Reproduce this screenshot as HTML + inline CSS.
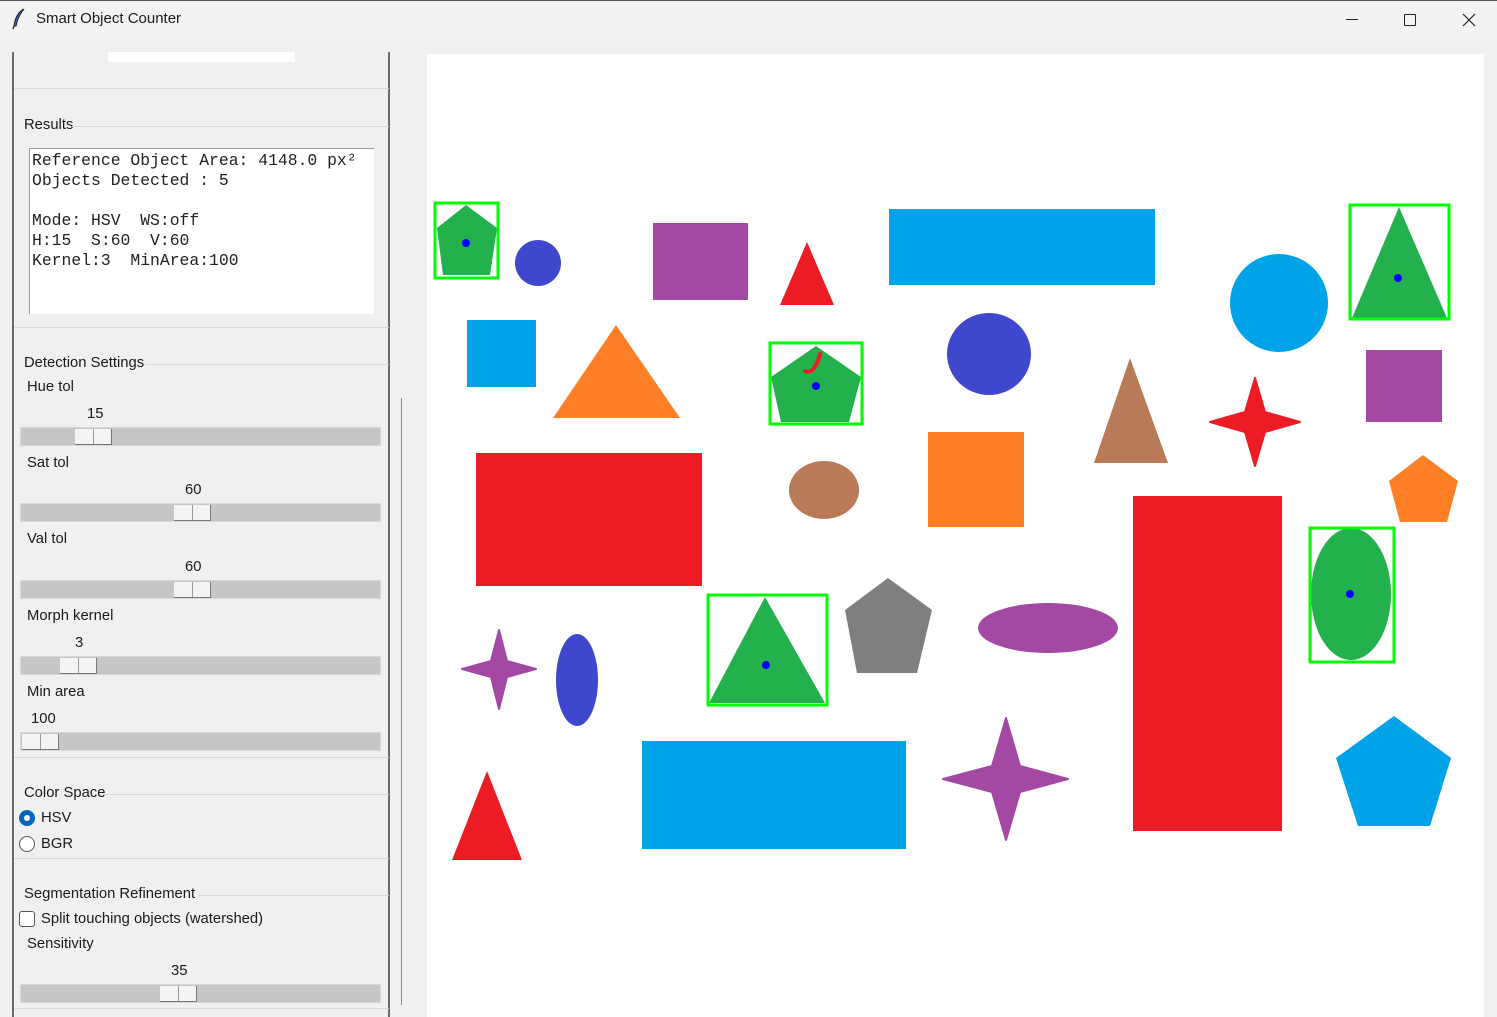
<!DOCTYPE html>
<html><head><meta charset="utf-8"><style>
*{margin:0;padding:0;box-sizing:border-box}
body{width:1497px;height:1017px;overflow:hidden;background:#f0f0f0;font-family:"Liberation Sans","DejaVu Sans",sans-serif;font-size:14.8px;color:#000;position:relative}
.a{position:absolute}
.t{position:absolute;font-size:14.8px;white-space:nowrap;line-height:16px;color:#1a1a1a}
.trough{position:absolute;left:20px;width:361px;height:19px;background:#c6c6c6;border:1px solid #d8d8d8}
.thumb{position:absolute;top:1px;width:37px;height:16px;background:#f4f4f4;border-right:1px solid #777;border-bottom:1px solid #777}
.thumb:after{content:"";position:absolute;left:18px;top:0;width:1px;height:15px;background:#999}
.hl{position:absolute;height:1px;background:#d9d9d9;left:14px;width:375px}
</style></head><body>
<div class="a" style="left:0;top:0;width:1497px;height:40px;background:#f3f3f3;border-top:1px solid #555"></div>
<svg class="a" style="left:10px;top:8px" width="18" height="22"><path d="M14 1 C8 4 5 10 4 18 L6 18 C7 12 10 6 14 1Z" fill="#3a66b0" stroke="#223" stroke-width="1"/><path d="M4 18 L3 21" stroke="#333" stroke-width="1.5"/></svg>
<div class="t" style="left:36px;top:11px;font-size:15px">Smart Object Counter</div>
<div class="a" style="left:1346px;top:19px;width:12px;height:1px;background:#222"></div>
<div class="a" style="left:1404px;top:14px;width:12px;height:12px;border:1px solid #222;border-radius:1px"></div>
<svg class="a" style="left:1462px;top:13px" width="14" height="14"><path d="M1 1L13 13M13 1L1 13" stroke="#222" stroke-width="1.2"/></svg>

<div class="a" style="left:12px;top:52px;width:2px;height:965px;background:#6a6a6a"></div>
<div class="a" style="left:388px;top:52px;width:2px;height:965px;background:#6a6a6a"></div>
<div class="a" style="left:401px;top:398px;width:1px;height:607px;background:#888"></div>
<div class="a" style="left:108px;top:52px;width:187px;height:10px;background:#fff"></div>
<div class="hl" style="top:88px"></div>
<div class="t" style="left:24px;top:117px">Results</div>
<div class="hl" style="top:126px;left:72px;width:317px"></div>
<div class="a" style="left:29px;top:148px;width:345px;height:166px;background:#fff;border-left:1px solid #999;border-top:1px solid #999"></div>
<pre class="a" style="left:32px;top:151px;font-family:'Liberation Mono','Courier New',monospace;font-size:16.4px;line-height:20px;color:#222">Reference Object Area: 4148.0 px²
Objects Detected : 5

Mode: HSV  WS:off
H:15  S:60  V:60
Kernel:3  MinArea:100</pre>
<div class="hl" style="top:327px"></div>
<div class="t" style="left:24px;top:355px">Detection Settings</div>
<div class="hl" style="top:364px;left:145px;width:244px"></div>

<div class="t" style="left:27px;top:379px">Hue tol</div>
<div class="t" style="left:87px;top:406px">15</div>
<div class="trough" style="top:427px"><div class="thumb" style="left:54px"></div></div>
<div class="t" style="left:27px;top:455px">Sat tol</div>
<div class="t" style="left:185px;top:482px">60</div>
<div class="trough" style="top:503px"><div class="thumb" style="left:153px"></div></div>
<div class="t" style="left:27px;top:531px">Val tol</div>
<div class="t" style="left:185px;top:559px">60</div>
<div class="trough" style="top:580px"><div class="thumb" style="left:153px"></div></div>
<div class="t" style="left:27px;top:608px">Morph kernel</div>
<div class="t" style="left:75px;top:635px">3</div>
<div class="trough" style="top:656px"><div class="thumb" style="left:39px"></div></div>
<div class="t" style="left:27px;top:684px">Min area</div>
<div class="t" style="left:31px;top:711px">100</div>
<div class="trough" style="top:732px"><div class="thumb" style="left:1px"></div></div>
<div class="hl" style="top:757px"></div>
<div class="t" style="left:24px;top:785px">Color Space</div>
<div class="hl" style="top:794px;left:104px;width:285px"></div>
<div class="a" style="left:19px;top:810px;width:16px;height:16px;border-radius:50%;background:#0067c0"></div>
<div class="a" style="left:24px;top:815px;width:6px;height:6px;border-radius:50%;background:#fff"></div>
<div class="t" style="left:41px;top:810px">HSV</div>
<div class="a" style="left:19px;top:836px;width:16px;height:16px;border-radius:50%;border:1px solid #555;background:#fff"></div>
<div class="t" style="left:41px;top:836px">BGR</div>
<div class="hl" style="top:858px"></div>
<div class="t" style="left:24px;top:886px">Segmentation Refinement</div>
<div class="hl" style="top:895px;left:198px;width:191px"></div>
<div class="a" style="left:19px;top:911px;width:16px;height:16px;border-radius:3px;border:1px solid #555;background:#fff"></div>
<div class="t" style="left:41px;top:911px">Split touching objects (watershed)</div>
<div class="t" style="left:27px;top:936px">Sensitivity</div>
<div class="t" style="left:171px;top:963px">35</div>
<div class="trough" style="top:984px"><div class="thumb" style="left:139px"></div></div>
<div class="hl" style="top:1008px"></div>

<svg class="a" style="left:0;top:0" width="1497" height="1017">
<rect x="427" y="54" width="1057" height="963" fill="#fff"/>
<polygon points="466,205 497,228 490,275 443,275 437,228" fill="#22b14c"/>
<rect x="435" y="203" width="63" height="75" fill="none" stroke="#00ff00" stroke-width="3"/>
<circle cx="466" cy="243" r="4" fill="#0000ff"/>
<circle cx="538" cy="263" r="23" fill="#3f48cc"/>
<rect x="653" y="223" width="95" height="77" fill="#a349a4"/>
<polygon points="807,242 834,305 780,305" fill="#ed1c24"/>
<rect x="889" y="209" width="266" height="76" fill="#00a2e8"/>
<circle cx="1279" cy="303" r="49" fill="#00a2e8"/>
<polygon points="1399,207 1447,318 1352,318" fill="#22b14c"/>
<rect x="1350" y="205" width="99" height="114" fill="none" stroke="#00ff00" stroke-width="3"/>
<circle cx="1398" cy="278" r="4" fill="#0000ff"/>
<rect x="467" y="320" width="69" height="67" fill="#00a2e8"/>
<polygon points="616,325 680,418 553,418" fill="#ff7f27"/>
<polygon points="816,346 861,377 849,422 781,422 771,377" fill="#22b14c"/>
<rect x="770" y="343" width="92" height="81" fill="none" stroke="#00ff00" stroke-width="3"/>
<path d="M805 371 Q811 373 814 368 Q818 362 820 354" fill="none" stroke="#ed1c24" stroke-width="4" stroke-linecap="round"/>
<circle cx="816" cy="386" r="4" fill="#0000ff"/>
<ellipse cx="989" cy="354" rx="42" ry="41" fill="#3f48cc"/>
<polygon points="1130,358 1168,463 1094,463" fill="#b97a57"/>
<path d="M1255 378 L1265 412 L1300 422 L1265 432 L1255 466 L1245 432 L1210 422 L1245 412Z" fill="#ed1c24" stroke="#ed1c24" stroke-width="2" stroke-linejoin="round"/>
<rect x="1366" y="350" width="76" height="72" fill="#a349a4"/>
<rect x="476" y="453" width="226" height="133" fill="#ed1c24"/>
<ellipse cx="824" cy="490" rx="35" ry="29" fill="#b97a57"/>
<rect x="928" y="432" width="96" height="95" fill="#ff7f27"/>
<polygon points="1423,455 1458,481 1447,522 1400,522 1389,481" fill="#ff7f27"/>
<rect x="1133" y="496" width="149" height="335" fill="#ed1c24"/>
<ellipse cx="1351" cy="594" rx="40" ry="66" fill="#22b14c"/>
<rect x="1310" y="528" width="84" height="134" fill="none" stroke="#00ff00" stroke-width="3"/>
<circle cx="1350" cy="594" r="4" fill="#0000ff"/>
<path d="M499 630 L507 661 L536 669 L507 677 L499 709 L491 677 L462 669 L491 661Z" fill="#a349a4" stroke="#a349a4" stroke-width="2" stroke-linejoin="round"/>
<ellipse cx="577" cy="680" rx="21" ry="46" fill="#3f48cc"/>
<polygon points="765,597 825,703 709,703" fill="#22b14c"/>
<rect x="708" y="595" width="119" height="110" fill="none" stroke="#00ff00" stroke-width="3"/>
<circle cx="766" cy="665" r="4" fill="#0000ff"/>
<polygon points="888,578 932,610 917,673 857,673 845,610" fill="#7f7f7f"/>
<ellipse cx="1048" cy="628" rx="70" ry="25" fill="#a349a4"/>
<rect x="642" y="741" width="264" height="108" fill="#00a2e8"/>
<path d="M1006 718 L1020 766 L1068 779 L1020 792 L1006 840 L992 792 L943 779 L992 766Z" fill="#a349a4" stroke="#a349a4" stroke-width="2" stroke-linejoin="round"/>
<polygon points="1394,716 1451,758 1430,826 1358,826 1336,758" fill="#00a2e8"/>
<polygon points="487,771 522,860 452,860" fill="#ed1c24"/>
</svg>
</body></html>
